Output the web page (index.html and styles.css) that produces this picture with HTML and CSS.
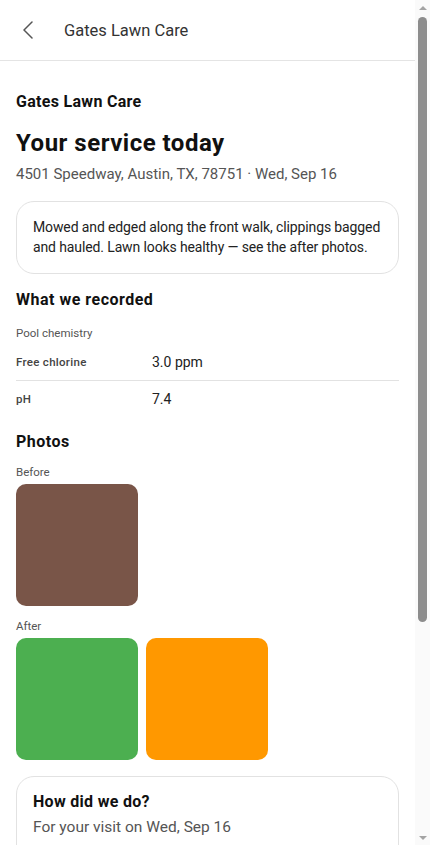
FILE: index.html
```html
<!DOCTYPE html>
<html lang="en">
<head>
    <meta charset="UTF-8">
    <meta name="viewport" content="width=device-width, initial-scale=1.0">
    <title>Your service today</title>
    <link rel="stylesheet" href="styles.css">
</head>
<body>
<div class="app">
    <div class="page">
        <header class="topbar">
            <button class="back" aria-label="Back">
                <svg width="12" height="18" viewBox="0 0 12 18"><path d="M10 1 L2 9 L10 17" fill="none" stroke="#555" stroke-width="1.5" stroke-linecap="round" stroke-linejoin="round"/></svg>
            </button>
            <div class="topbar-title">Gates Lawn Care</div>
        </header>

        <main class="content">
            <div class="company">Gates Lawn Care</div>
            <h1>Your service today</h1>
            <div class="address">4501 Speedway, Austin, TX, 78751 · Wed, Sep 16</div>

            <div class="card note">
                Mowed and edged along the front walk, clippings bagged and hauled. Lawn looks healthy — see the after photos.
            </div>

            <h2>What we recorded</h2>
            <div class="label group-label">Pool chemistry</div>
            <div class="readings">
                <div class="reading">
                    <span class="reading-name">Free chlorine</span>
                    <span class="reading-value">3.0 ppm</span>
                </div>
                <div class="reading">
                    <span class="reading-name">pH</span>
                    <span class="reading-value">7.4</span>
                </div>
            </div>

            <h2 class="photos-title">Photos</h2>
            <div class="label">Before</div>
            <div class="photos">
                <div class="photo brown"></div>
            </div>
            <div class="label">After</div>
            <div class="photos">
                <div class="photo green"></div>
                <div class="photo orange"></div>
            </div>

            <div class="card feedback">
                <div class="feedback-title">How did we do?</div>
                <div class="feedback-sub">For your visit on Wed, Sep 16</div>
                <div class="stars">
                    <span>☆</span><span>☆</span><span>☆</span><span>☆</span><span>☆</span>
                </div>
                <textarea class="comment" placeholder="Tell us more (optional)"></textarea>
                <button class="submit">Send feedback</button>
            </div>

            <div class="footer-note">Questions? Reply to this message to reach Gates Lawn Care.</div>
        </main>
    </div>

    <!-- scroll rail -->
    <div class="rail">
        <div class="rail-arrow up"></div>
        <div class="rail-track">
            <div class="rail-thumb"></div>
        </div>
        <div class="rail-arrow down"></div>
    </div>
</div>
</body>
</html>
```

FILE: styles.css
```css
html, body {
    margin: 0;
    height: 100%;
    overflow: hidden;
}

body {
    background: #fff;
    font-family: Roboto, "Noto Sans", sans-serif;
    color: #111;
}

/* App shell: page + scroll rail */
.app {
    display: flex;
    height: 100vh;
}

.page {
    flex: 1;
    min-width: 0;
    overflow: hidden;
}

.rail {
    width: 15px;
    flex-shrink: 0;
    background: #fafafa;
    display: flex;
    flex-direction: column;
    align-items: center;
}

.rail-arrow {
    height: 15px;
    display: flex;
    align-items: center;
    justify-content: center;
}

.rail-arrow::before {
    content: "";
    border-left: 4px solid transparent;
    border-right: 4px solid transparent;
}

.rail-arrow.up::before {
    border-bottom: 4px solid #a3a3a3;
}

.rail-arrow.down::before {
    border-top: 4px solid #a3a3a3;
}

.rail-track {
    flex: 1;
    width: 100%;
    padding-top: 2px;
    box-sizing: border-box;
}

.rail-thumb {
    width: 9px;
    height: 605px;
    margin: 0 auto;
    border-radius: 5px;
    background: #8d8d8d;
}

/* Top bar */
.topbar {
    height: 60px;
    display: flex;
    align-items: center;
    border-bottom: 1px solid #e4e4e4;
    padding: 0 16px;
}

.back {
    border: none;
    background: none;
    padding: 0 0 0 6px;
    width: 48px;
    display: flex;
    align-items: center;
    box-sizing: border-box;
}

.topbar-title {
    font-size: 16.5px;
    color: #333;
}

/* Content */
.content {
    padding: 31px 16px 48px;
}

.company {
    font-size: 16px;
    line-height: 20px;
    font-weight: 700;
    letter-spacing: 0.3px;
    margin-bottom: 16px;
}

h1 {
    font-size: 24px;
    line-height: 30px;
    font-weight: 700;
    letter-spacing: 0.5px;
    margin: 0 0 6px;
}

.address {
    font-size: 15px;
    line-height: 20px;
    color: #555;
}

.card {
    border: 1px solid #e2e2e2;
    border-radius: 18px;
}

.note {
    margin-top: 17px;
    padding: 15px 16px 16px;
    font-size: 14px;
    line-height: 20px;
    letter-spacing: -0.12px;
    color: #222;
}

h2 {
    font-size: 16px;
    line-height: 20px;
    font-weight: 700;
    letter-spacing: 0.5px;
    margin: 16px 0 16px;
}

.photos-title {
    margin-bottom: 13px;
}

.label {
    font-size: 11.5px;
    line-height: 14px;
    color: #555;
    margin-bottom: 5px;
}

.group-label {
    margin-bottom: 4px;
}

.readings {
    margin-bottom: 16px;
}

.reading {
    display: flex;
    align-items: center;
    height: 36px;
}

.reading + .reading {
    border-top: 1px solid #e2e2e2;
    height: 35px;
}

.reading-name {
    width: 136px;
    font-size: 11.5px;
    font-weight: 500;
    letter-spacing: 0.3px;
    color: #444;
}

.reading-value {
    font-size: 14px;
    color: #222;
}

.photos {
    display: flex;
    gap: 8px;
    margin-bottom: 13px;
}

.photo {
    width: 122px;
    height: 122px;
    border-radius: 10px;
}

.brown { background: #795548; }
.green { background: #4caf50; }
.orange { background: #ff9800; }

.feedback {
    margin-top: 16px;
    padding: 15px 16px 20px;
}

.feedback-title {
    font-size: 16px;
    line-height: 20px;
    font-weight: 700;
    letter-spacing: 0.3px;
    margin-bottom: 4px;
}

.feedback-sub {
    font-size: 15.5px;
    line-height: 22px;
    color: #555;
}

.stars {
    display: flex;
    gap: 10px;
    margin: 22px 0 12px;
    font-size: 30px;
    line-height: 34px;
    color: #bbb;
}

.comment {
    display: block;
    width: 100%;
    height: 80px;
    box-sizing: border-box;
    border: 1px solid #e2e2e2;
    border-radius: 12px;
    padding: 10px 12px;
    font-family: inherit;
    font-size: 14px;
    resize: none;
}

.submit {
    margin-top: 12px;
    width: 100%;
    height: 44px;
    border: none;
    border-radius: 22px;
    background: #111;
    color: #fff;
    font-family: inherit;
    font-size: 15px;
    font-weight: 500;
}

.footer-note {
    margin-top: 24px;
    font-size: 12px;
    color: #777;
    text-align: center;
}
```
